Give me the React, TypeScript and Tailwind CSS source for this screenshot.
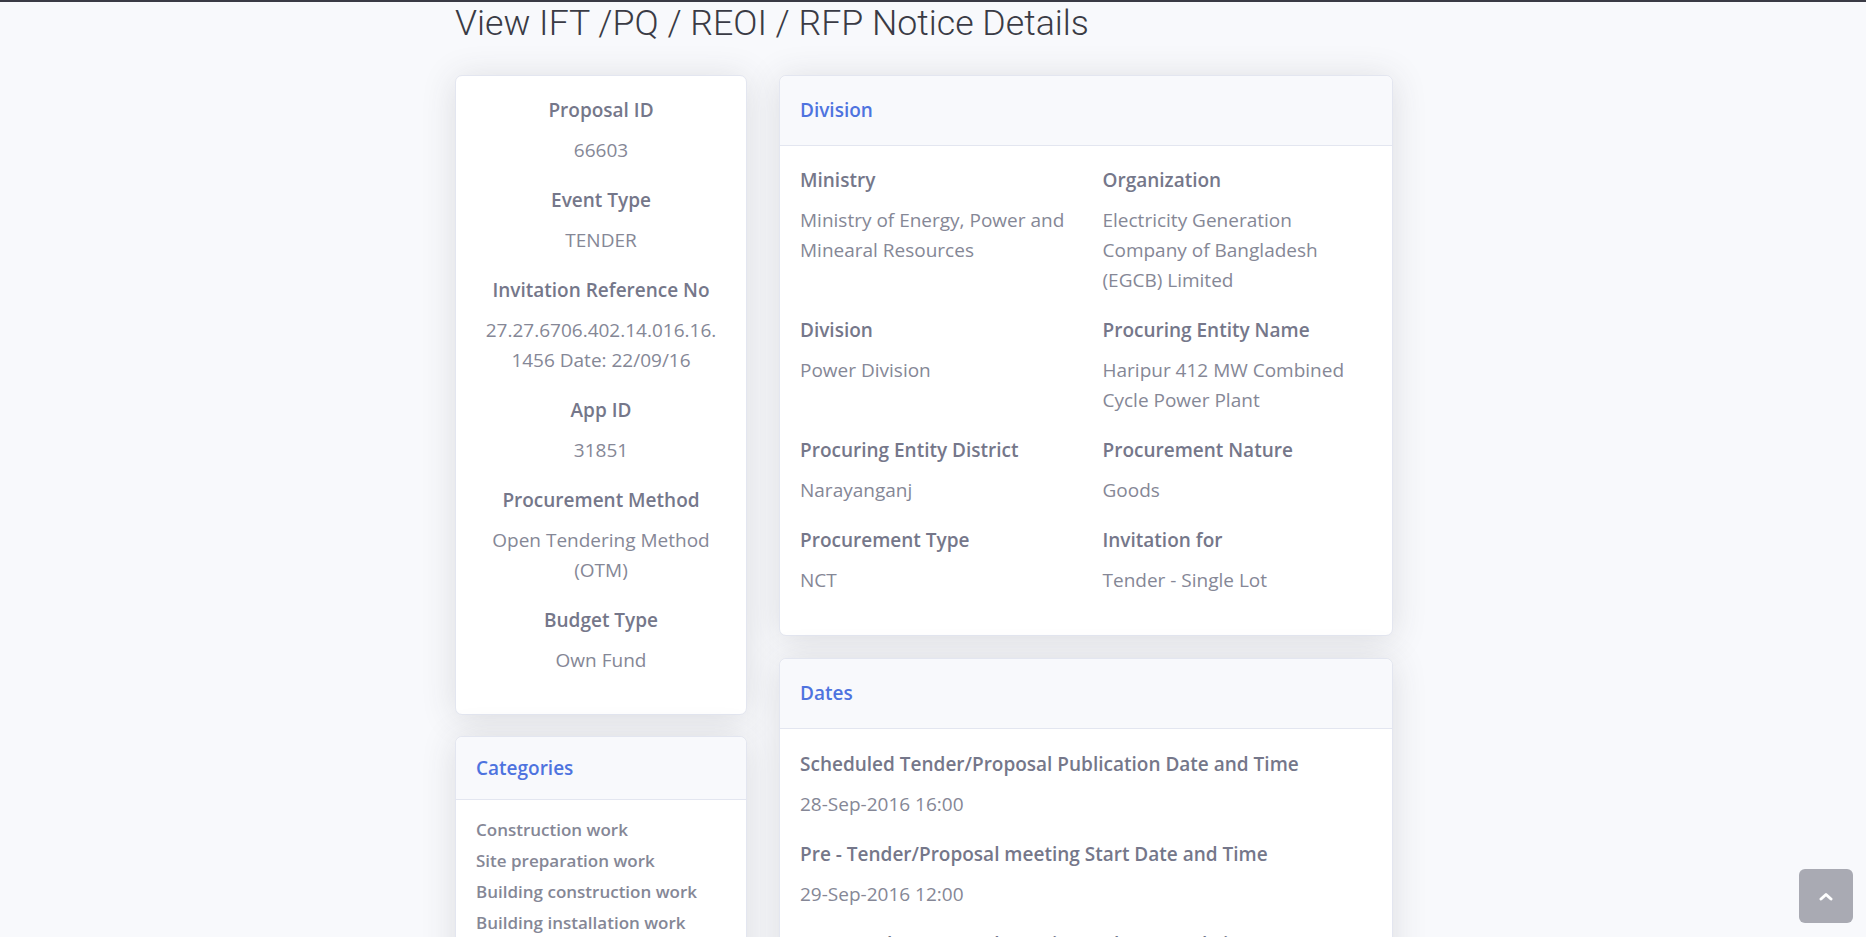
import { ReactNode } from "react";

const bodyFont = { fontFamily: '"Open Sans", "Noto Sans", sans-serif' };

const summary = [
  { label: "Proposal ID", value: "66603" },
  { label: "Event Type", value: "TENDER" },
  {
    label: "Invitation Reference No",
    value: (
      <>
        27.27.6706.402.14.016.16.<wbr />1456 Date: 22/09/16
      </>
    ),
  },
  { label: "App ID", value: "31851" },
  { label: "Procurement Method", value: "Open Tendering Method (OTM)" },
  { label: "Budget Type", value: "Own Fund" },
];

const categories = [
  "Construction work",
  "Site preparation work",
  "Building construction work",
  "Building installation work",
  "Electrical installation work",
  "Power plant construction work",
];

const division = [
  { label: "Ministry", value: "Ministry of Energy, Power and Minearal Resources" },
  { label: "Organization", value: "Electricity Generation Company of Bangladesh (EGCB) Limited" },
  { label: "Division", value: "Power Division" },
  { label: "Procuring Entity Name", value: "Haripur 412 MW Combined Cycle Power Plant" },
  { label: "Procuring Entity District", value: "Narayanganj" },
  { label: "Procurement Nature", value: "Goods" },
  { label: "Procurement Type", value: "NCT" },
  { label: "Invitation for", value: "Tender - Single Lot" },
];

const dates = [
  { label: "Scheduled Tender/Proposal Publication Date and Time", value: "28-Sep-2016 16:00" },
  { label: "Pre - Tender/Proposal meeting Start Date and Time", value: "29-Sep-2016 12:00" },
  { label: "Pre - Tender/Proposal meeting End Date and Time", value: "29-Sep-2016 13:00" },
  { label: "Tender/Proposal Document last selling / downloading Date and Time", value: "26-Oct-2016 12:00" },
];

function Card({ children, className = "" }: { children: ReactNode; className?: string }) {
  return (
    <div
      className={`rounded-[7px] border border-[#e3e6f0] bg-white shadow-[0_3px_34px_0_rgba(58,59,69,0.15)] ${className}`}
    >
      {children}
    </div>
  );
}

function CardHeader({ title, className = "" }: { title: string; className?: string }) {
  return (
    <div
      className={`flex items-center rounded-t-[7px] border-b border-[#e3e6f0] bg-[#f8f9fc] px-5 ${className}`}
    >
      <span className="text-[19px] font-semibold text-[#4e73df]">{title}</span>
    </div>
  );
}

function Field({ label, value, center = false }: { label: string; value: ReactNode; center?: boolean }) {
  return (
    <div className={center ? "text-center" : ""}>
      <div className="text-[19px] font-semibold leading-[30px] text-[#75778a]">{label}</div>
      <div className="mt-[10px] break-words text-[19px] leading-[30px] text-[#858796]">{value}</div>
    </div>
  );
}

export default function App() {
  return (
    <div className="h-screen overflow-hidden bg-[#f8f9fc]" style={bodyFont}>
      <div className="h-[2px] bg-[#3a3b45]" />
      <div className="mx-auto w-[956px]">
        <h1
          className="text-[35.7px] font-light leading-[43px] text-[#3a3b45]"
          style={{ fontFamily: "Roboto, sans-serif" }}
        >
          View IFT /PQ / REOI / RFP Notice Details
        </h1>

        <div className="mt-[30px] grid grid-cols-[292px_614px] items-start gap-x-[32px]">
          {/* Left column */}
          <div className="flex flex-col gap-[21px]">
            <Card className="px-5 pb-[39px] pt-[19px]">
              <div className="flex flex-col gap-5">
                {summary.map((item) => (
                  <Field key={item.label} label={item.label} value={item.value} center />
                ))}
              </div>
            </Card>

            <Card>
              <CardHeader title="Categories" className="h-[63px]" />
              <div className="px-5 pb-4 pt-[14px]">
                {categories.map((c) => (
                  <div key={c} className="text-[17px] font-semibold leading-[31px] text-[#858796]">
                    {c}
                  </div>
                ))}
              </div>
            </Card>
          </div>

          {/* Right column */}
          <div className="flex flex-col gap-[22px]">
            <Card>
              <CardHeader title="Division" className="h-[70px]" />
              <div className="grid grid-cols-2 gap-x-[33px] gap-y-5 px-5 pb-10 pt-[19px]">
                {division.map((f) => (
                  <Field key={f.label} label={f.label} value={f.value} />
                ))}
              </div>
            </Card>

            <Card>
              <CardHeader title="Dates" className="h-[70px]" />
              <div className="flex flex-col gap-5 px-5 pb-10 pt-5">
                {dates.map((f) => (
                  <Field key={f.label} label={f.label} value={f.value} />
                ))}
              </div>
            </Card>
          </div>
        </div>
      </div>

      <button
        type="button"
        className="fixed bottom-[14px] right-[13px] flex h-[54px] w-[54px] items-center justify-center rounded-[6px] bg-[rgba(90,92,105,0.5)]"
      >
        <svg width="14" height="9" viewBox="0 0 14 9" fill="none">
          <polyline
            points="2,7 7,2.5 12,7"
            stroke="white"
            strokeWidth="3"
            strokeLinecap="round"
            strokeLinejoin="round"
          />
        </svg>
      </button>
    </div>
  );
}
